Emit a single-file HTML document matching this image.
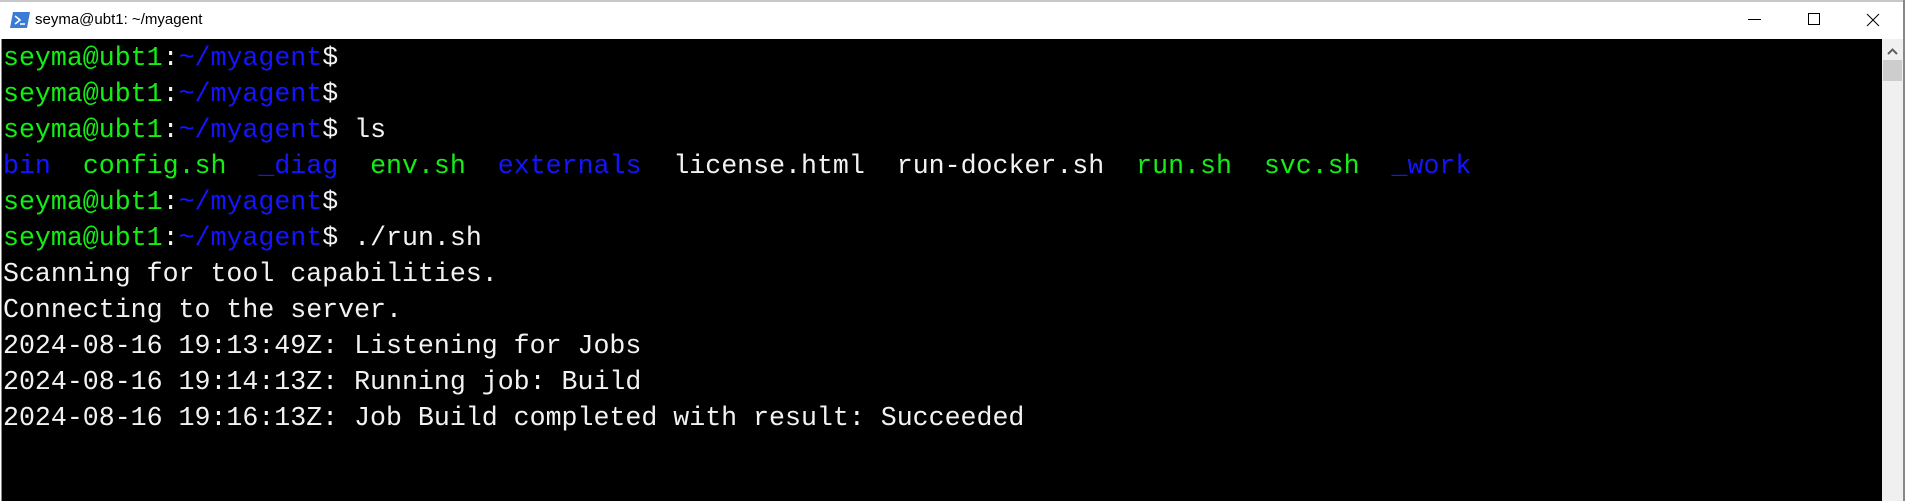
<!DOCTYPE html>
<html><head><meta charset="utf-8"><style>
html,body{margin:0;padding:0;width:1905px;height:501px;overflow:hidden;background:#fff}
.top{position:absolute;left:0;top:0;width:1905px;height:2px;background:#c8c8c8}
.title{position:absolute;left:0;top:2px;width:1905px;height:37px;background:#fff}
.title span{position:absolute;left:35px;top:9px;font:15px "Liberation Sans",sans-serif;color:#000}
.term{position:absolute;left:1px;top:39px;width:1881px;height:462px;background:#000;border-left:1px solid #888}
pre{margin:0;position:absolute;left:1px;top:1px;font:26.6px/36px "Liberation Mono","DejaVu Sans Mono",monospace;color:#f2f2f2}
.g{color:#14ee14}.b{color:#1414ff}
.sb{position:absolute;left:1882px;top:39px;width:21px;height:462px;background:#f0f0f0}
.thumb{position:absolute;left:1883px;top:60px;width:19px;height:21px;background:#cdcdcd}
.rb{position:absolute;left:1903px;top:0;width:2px;height:501px;background:#888}
</style></head><body>
<div class="top"></div>
<div class="title">
<svg style="position:absolute;left:10px;top:10px" width="20" height="16"><polygon points="3,0 20,0 17,16 0,16" fill="#3a7bd5"/><path d="M5 4 L10 8 L5 12" stroke="#fff" stroke-width="1.6" fill="none"/><line x1="10" y1="12" x2="15" y2="12" stroke="#fff" stroke-width="1.5"/></svg>
<span>seyma@ubt1: ~/myagent</span>
<svg style="position:absolute;left:1748px;top:17px" width="14" height="2"><rect width="13" height="1" fill="#000"/></svg>
<svg style="position:absolute;left:1808px;top:11px" width="13" height="13"><rect x="0.5" y="0.5" width="11" height="11" fill="none" stroke="#000"/></svg>
<svg style="position:absolute;left:1866px;top:11px" width="14" height="14"><path d="M1 1L13 13M13 1L1 13" stroke="#000" stroke-width="1"/></svg>
</div>
<div class="term"><pre><span class="g">seyma@ubt1</span>:<span class="b">~/myagent</span>$
<span class="g">seyma@ubt1</span>:<span class="b">~/myagent</span>$
<span class="g">seyma@ubt1</span>:<span class="b">~/myagent</span>$ ls
<span class="b">bin</span>  <span class="g">config.sh</span>  <span class="b">_diag</span>  <span class="g">env.sh</span>  <span class="b">externals</span>  license.html  run-docker.sh  <span class="g">run.sh</span>  <span class="g">svc.sh</span>  <span class="b">_work</span>
<span class="g">seyma@ubt1</span>:<span class="b">~/myagent</span>$
<span class="g">seyma@ubt1</span>:<span class="b">~/myagent</span>$ ./run.sh
Scanning for tool capabilities.
Connecting to the server.
2024-08-16 19:13:49Z: Listening for Jobs
2024-08-16 19:14:13Z: Running job: Build
2024-08-16 19:16:13Z: Job Build completed with result: Succeeded</pre></div>
<div class="sb"><svg style="position:absolute;left:5px;top:9px" width="11" height="7"><path d="M1 6L5.5 1.5L10 6" stroke="#606060" stroke-width="2" fill="none"/></svg></div>
<div class="thumb"></div>
<div class="rb"></div>
</body></html>
